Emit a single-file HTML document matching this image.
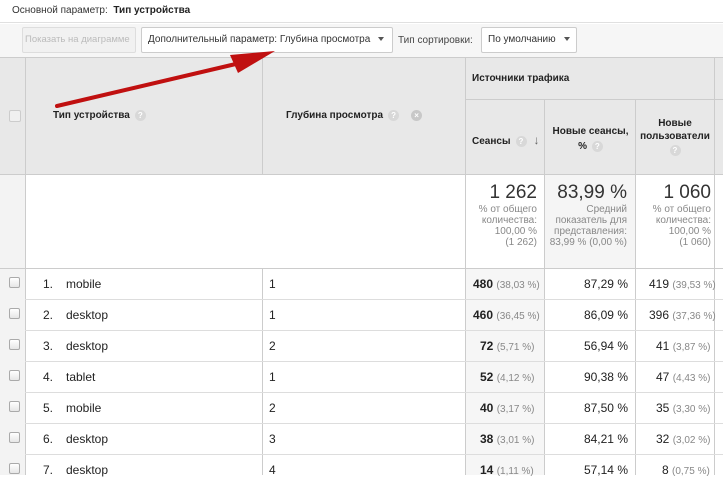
<!DOCTYPE html><html><head><meta charset="utf-8"><style>
*{margin:0;padding:0;box-sizing:border-box}
body{width:723px;height:475px;overflow:hidden;background:#fff;font-family:"Liberation Sans",Arial,sans-serif;font-size:11px;color:#222;position:relative}
.a{position:absolute}
.b{font-weight:bold}
.q{display:inline-block;width:11px;height:11px;border-radius:50%;background:#d8d8d8;color:#fff;font-size:8px;text-align:center;line-height:11px;vertical-align:middle;margin-left:5px}
.cb{position:absolute;left:9px;width:11px;height:11px;border:1px solid #aaa;border-radius:2px;background:linear-gradient(#fff,#e6e6e6)}
.btn{position:absolute;top:27px;height:26px;border:1px solid #ccc;border-radius:2px;background:#fff;font-size:10px;line-height:24px;padding-left:6px;color:#333;white-space:nowrap;overflow:hidden}
.tri{display:inline-block;width:0;height:0;border-left:3px solid transparent;border-right:3px solid transparent;border-top:4px solid #555;vertical-align:middle;margin-left:8px}
.vl{position:absolute;width:1px;background:#ccc}
.hl{position:absolute;height:1px;background:#ddd}
.r{text-align:right}
.g{color:#888;font-size:10px}
</style></head><body>
<div class="a" style="left:0;top:0;width:723px;height:23px;background:#fff;border-bottom:1px solid #e0e0e0"></div>
<div class="a" style="left:12px;top:5px;font-size:10px;color:#333">Основной параметр:&nbsp; <b style="color:#222">Тип устройства</b></div>
<div class="a" style="left:0;top:24px;width:723px;height:33px;background:#f6f6f6"></div>
<div class="btn" style="left:22px;width:114px;background:#f1f1f1;color:#bbb;border-color:#ddd;padding-left:2px;font-size:9.5px">Показать на диаграмме</div>
<div class="btn" style="left:141px;width:252px">Дополнительный параметр: Глубина просмотра<span class="tri"></span></div>
<div class="a" style="left:398px;top:35px;color:#444;font-size:10px;white-space:nowrap">Тип сортировки:</div>
<div class="btn" style="left:481px;width:96px">По умолчанию<span class="tri"></span></div>
<div class="a" style="left:0;top:57px;width:723px;height:118px;background:#e8e8e8;border-top:1px solid #ccc;border-bottom:1px solid #ccc"></div>
<div class="a" style="left:0;top:175px;width:25px;height:300px;background:#f3f3f3"></div>
<div class="a" style="left:544px;top:175px;width:91px;height:93px;background:#f5f5f5"></div>
<div class="a" style="left:465px;top:268px;width:79px;height:207px;background:#f6f6f6"></div>
<div class="vl" style="left:25px;top:57px;height:418px"></div>
<div class="vl" style="left:262px;top:57px;height:118px"></div>
<div class="vl" style="left:262px;top:268px;height:207px"></div>
<div class="vl" style="left:465px;top:57px;height:418px"></div>
<div class="vl" style="left:544px;top:99px;height:376px"></div>
<div class="vl" style="left:635px;top:99px;height:376px"></div>
<div class="vl" style="left:714px;top:57px;height:418px"></div>
<div class="hl" style="left:465px;top:99px;width:258px;background:#ccc"></div>
<div class="hl" style="left:0;top:268px;width:723px;background:#ccc"></div>
<div class="hl" style="left:25px;top:299px;width:698px"></div>
<div class="hl" style="left:25px;top:330px;width:698px"></div>
<div class="hl" style="left:25px;top:361px;width:698px"></div>
<div class="hl" style="left:25px;top:392px;width:698px"></div>
<div class="hl" style="left:25px;top:423px;width:698px"></div>
<div class="hl" style="left:25px;top:454px;width:698px"></div>
<div class="cb" style="top:110px;width:12px;height:12px;background:#f0f0f0;border-color:#ccc"></div>
<div class="a b" style="left:53px;top:110px;font-size:10px">Тип устройства<span class="q">?</span></div>
<div class="a b" style="left:286px;top:110px;font-size:10px">Глубина просмотра<span class="q">?</span><span class="q" style="margin-left:12px;background:#c8c8c8">×</span></div>
<div class="a b" style="left:472px;top:73px;font-size:10px">Источники трафика</div>
<div class="a b" style="left:472px;top:133px;font-size:10px">Сеансы<span class="q">?</span><span style="margin-left:7px;color:#666;font-size:12px">↓</span></div>
<div class="a b" style="left:546px;top:124px;width:89px;text-align:center;font-size:10px;line-height:15px">Новые сеансы,<br>% <span class="q" style="margin-left:2px">?</span></div>
<div class="a b" style="left:636px;top:117px;width:78px;text-align:center;font-size:10px;line-height:13px">Новые<br>пользователи<br><span class="q" style="margin:2px 0 0">?</span></div>
<div class="a r" style="left:466px;top:182px;width:71px"><div style="font-size:19px;color:#333">1 262</div><div class="g" style="line-height:11px">% от общего<br>количества:<br>100,00 %<br>(1 262)</div></div>
<div class="a r" style="left:545px;top:182px;width:82px"><div style="font-size:19px;color:#333">83,99 %</div><div class="g" style="line-height:11px">Средний<br>показатель для<br>представления:<br>83,99 % (0,00 %)</div></div>
<div class="a r" style="left:636px;top:182px;width:75px"><div style="font-size:19px;color:#333">1 060</div><div class="g" style="line-height:11px">% от общего<br>количества:<br>100,00 %<br>(1 060)</div></div>
<div class="a" style="left:0;top:268px;width:723px;font-size:12px">
<div style="position:relative;height:31px"><div class="cb" style="top:9px"></div><span class="a" style="left:43px;top:9px">1.</span><span class="a" style="left:66px;top:9px">mobile</span><span class="a" style="left:269px;top:9px">1</span><span class="a" style="left:473px;top:9px"><b>480</b> <span class="g">(38,03 %)</span></span><span class="a r" style="left:545px;top:9px;width:83px">87,29 %</span><span class="a" style="left:649px;top:9px">419 <span class="g">(39,53 %)</span></span></div>
<div style="position:relative;height:31px"><div class="cb" style="top:9px"></div><span class="a" style="left:43px;top:9px">2.</span><span class="a" style="left:66px;top:9px">desktop</span><span class="a" style="left:269px;top:9px">1</span><span class="a" style="left:473px;top:9px"><b>460</b> <span class="g">(36,45 %)</span></span><span class="a r" style="left:545px;top:9px;width:83px">86,09 %</span><span class="a" style="left:649px;top:9px">396 <span class="g">(37,36 %)</span></span></div>
<div style="position:relative;height:31px"><div class="cb" style="top:9px"></div><span class="a" style="left:43px;top:9px">3.</span><span class="a" style="left:66px;top:9px">desktop</span><span class="a" style="left:269px;top:9px">2</span><span class="a" style="left:480px;top:9px"><b>72</b> <span class="g">(5,71 %)</span></span><span class="a r" style="left:545px;top:9px;width:83px">56,94 %</span><span class="a" style="left:656px;top:9px">41 <span class="g">(3,87 %)</span></span></div>
<div style="position:relative;height:31px"><div class="cb" style="top:9px"></div><span class="a" style="left:43px;top:9px">4.</span><span class="a" style="left:66px;top:9px">tablet</span><span class="a" style="left:269px;top:9px">1</span><span class="a" style="left:480px;top:9px"><b>52</b> <span class="g">(4,12 %)</span></span><span class="a r" style="left:545px;top:9px;width:83px">90,38 %</span><span class="a" style="left:656px;top:9px">47 <span class="g">(4,43 %)</span></span></div>
<div style="position:relative;height:31px"><div class="cb" style="top:9px"></div><span class="a" style="left:43px;top:9px">5.</span><span class="a" style="left:66px;top:9px">mobile</span><span class="a" style="left:269px;top:9px">2</span><span class="a" style="left:480px;top:9px"><b>40</b> <span class="g">(3,17 %)</span></span><span class="a r" style="left:545px;top:9px;width:83px">87,50 %</span><span class="a" style="left:656px;top:9px">35 <span class="g">(3,30 %)</span></span></div>
<div style="position:relative;height:31px"><div class="cb" style="top:9px"></div><span class="a" style="left:43px;top:9px">6.</span><span class="a" style="left:66px;top:9px">desktop</span><span class="a" style="left:269px;top:9px">3</span><span class="a" style="left:480px;top:9px"><b>38</b> <span class="g">(3,01 %)</span></span><span class="a r" style="left:545px;top:9px;width:83px">84,21 %</span><span class="a" style="left:656px;top:9px">32 <span class="g">(3,02 %)</span></span></div>
<div style="position:relative;height:31px"><div class="cb" style="top:9px"></div><span class="a" style="left:43px;top:9px">7.</span><span class="a" style="left:66px;top:9px">desktop</span><span class="a" style="left:269px;top:9px">4</span><span class="a" style="left:480px;top:9px"><b>14</b> <span class="g">(1,11 %)</span></span><span class="a r" style="left:545px;top:9px;width:83px">57,14 %</span><span class="a" style="left:662px;top:9px">8 <span class="g">(0,75 %)</span></span></div>
</div>
<svg class="a" style="left:0;top:0" width="723" height="475"><line x1="57" y1="106" x2="240" y2="63" stroke="#c01010" stroke-width="4" stroke-linecap="round"/><polygon points="275,51 230,55 238,73" fill="#c01010"/></svg>
</body></html>
